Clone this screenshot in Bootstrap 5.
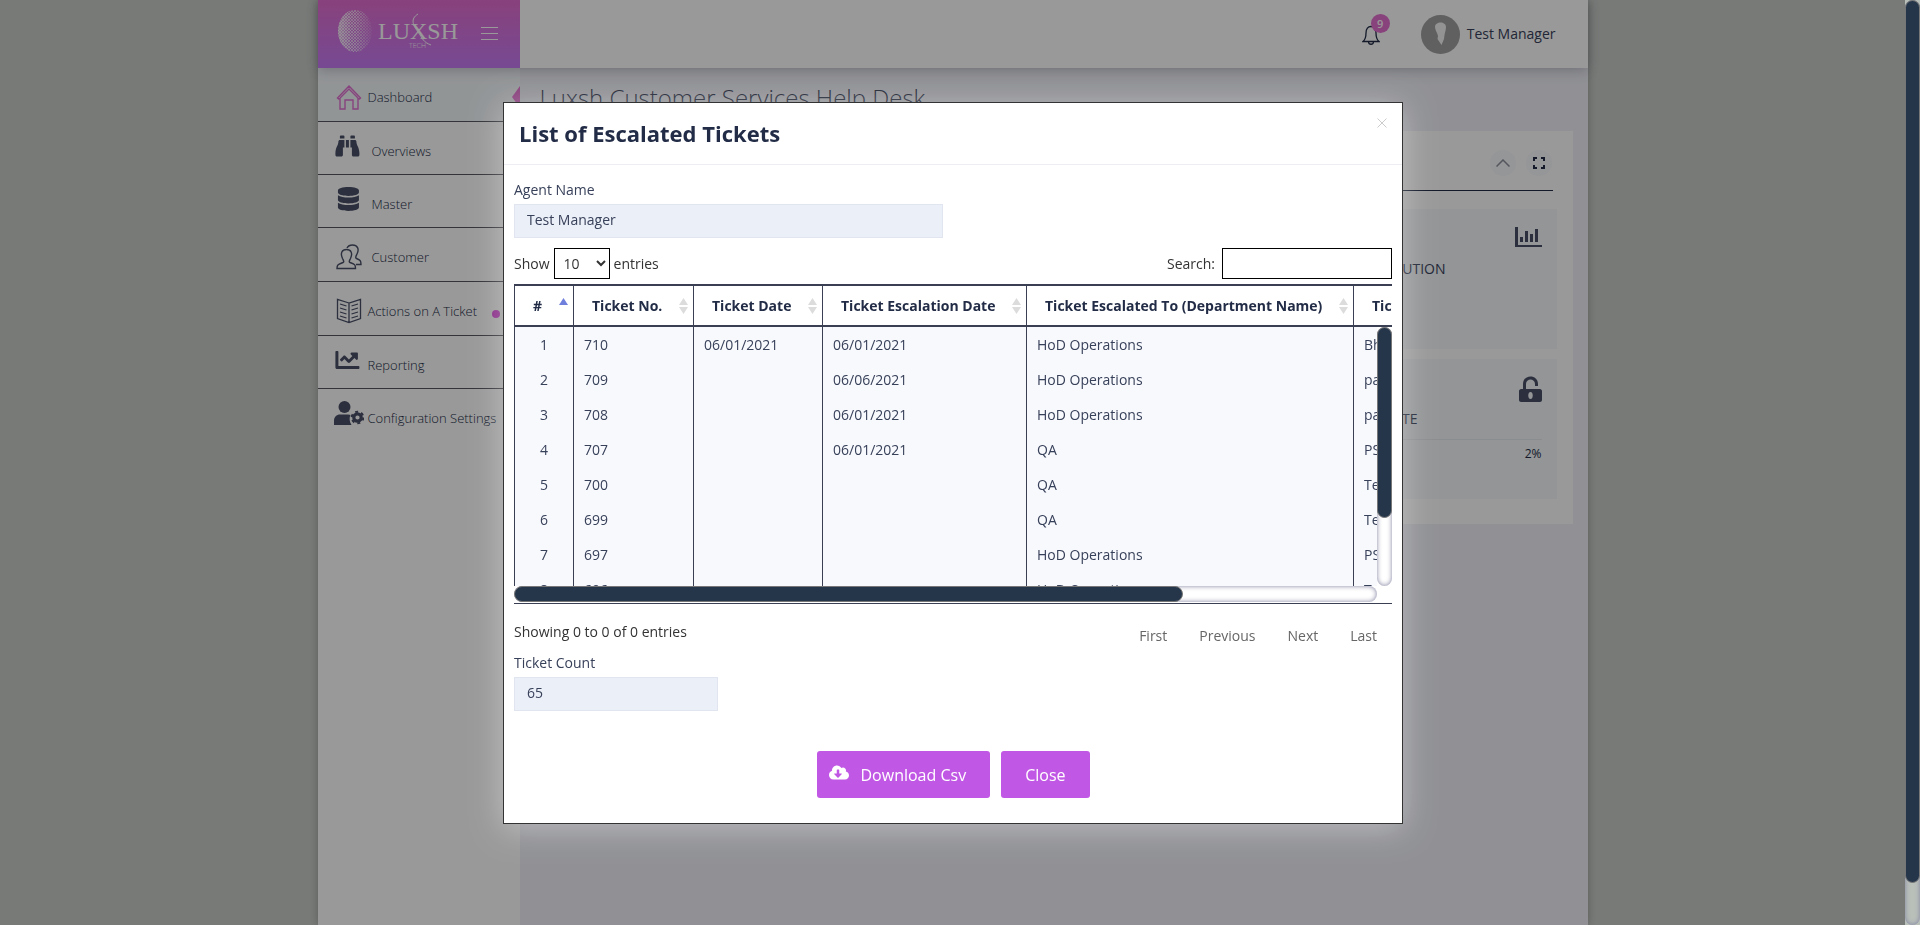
<!DOCTYPE html>
<html lang="en">
<head>
<meta charset="utf-8">
<meta name="viewport" content="width=device-width, initial-scale=1">
<title>Luxsh Customer Services Help Desk</title>
<link href="https://cdn.jsdelivr.net/npm/bootstrap@5.3.0/dist/css/bootstrap.min.css" rel="stylesheet">
<style>
  :root { --ink: #222c46; --soft: #38415a; --line: #3b3f54; --bar: #25364b; --violet: #c158e5; }
  html, body { height: 100%; }
  body { font-family: "Open Sans", sans-serif; font-size: 14px; line-height: 20px; color: var(--soft); background: #c8ccc8; overflow: hidden; }
  a { color: inherit; text-decoration: none; }

  .app-shell { max-width: 1270px; background: #f0f1f8; box-shadow: 0 0 8px rgba(0,0,0,.25); }
  .app-top { height: 68px; background: #fff; box-shadow: 0 2px 12px rgba(60,60,80,.3); z-index: 1; }
  .brand-box { width: 202px; background: linear-gradient(#e36ecf, #c67bf5); padding: 0 22px 0 18px; }
  .side-menu { width: 202px; background: #fff; }
  .side-menu a { height: 54px; padding: 5px 0 0 16px; gap: 4px; border-bottom: 1px solid #55565f; font-size: 13px; font-weight: 300; color: var(--ink); }
  .side-menu li:nth-child(2) a, .side-menu li:nth-child(3) a, .side-menu li:nth-child(6) a { height: 53px; }
  .side-menu li:last-child a { height: 52px; border-bottom: 0; }
  .side-menu a.current { background: #f4f8fb; }
  .side-menu .raised { margin-bottom: 9px; }
  .pointer-mark { right: 0; top: 18px; border: 11px solid transparent; border-right: 8px solid #e36ecf; border-left: 0; }
  .dot-mark { right: 20px; top: 28px; width: 8px; height: 8px; background: #e04ade; }
  .count-pill { left: 9px; top: -9px; width: 19px; height: 19px; background: #e36ecf; color: #fff; font-size: 11px; line-height: 19px; }
  .user-zone { gap: 41px; padding-right: 32px; }
  .user-link { gap: 7px; }
  .page-body { padding: 12px 15px 0 20px; }
  .page-body h1 { font-size: 24px; line-height: 36px; font-weight: 300; margin-bottom: 15px; }
  .panel-box { background: #fff; padding: 19px 16px 25px; }
  .panel-tools { gap: 10px; padding: 0 1px 14px; margin: 0 4px 18px; border-bottom: 1px solid var(--ink); }
  .round-tool { width: 26px; height: 26px; border: 0; background: #f9fafd; padding: 0; }
  .tile-stack { gap: 10px; }
  .stat-tile { height: 140px; background: #f5f8fb; padding: 17px 15px; }
  .stat-icon { height: 33px; line-height: 0; }
  .stat-tile h2 { font-size: 14px; line-height: 20px; font-weight: 500; margin: 0; }
  .stat-tile hr { margin: 10px 0 4px; color: #c0c4cc; }
  .stat-tile p { font-size: 12px; color: var(--ink); }

  .page-scroll { width: 15px; background: #b9c0ba; }
  .thumb { background: var(--bar); border-radius: 8px; border: 1px solid #777; }
  .page-scroll .thumb { height: 95.5%; }
  .track { background: #fff; border-radius: 8px; box-shadow: inset 0 0 5px #8080a0; }

  .modal-veil { background: rgba(0,0,0,.4); right: 15px; width: auto; padding-left: 1px; }
  .modal-dialog.wide { max-width: 900px; margin: 102px auto 0; }
  .modal-content { border: 1px solid #333; border-radius: 0; color: var(--soft); box-shadow: 0 4px 30px rgba(255,255,255,.4); }
  .modal-header { padding: 15px; border-color: #eceef3; align-items: flex-start; }
  .modal-title { font-size: 22px; line-height: 31px; font-weight: 700; color: var(--ink); }
  .x-btn { border: 0; background: none; padding: 0; line-height: 0; }
  .modal-body { padding: 15px 10px 25px; }
  .soft-input { height: 34px; border: 1px solid #e1e5f0; border-radius: 0; background: #ebeff8; color: var(--soft); font-size: 14px; padding: 0 12px 4px; }
  .half { width: 429px; max-width: 100%; }
  .quarter { width: 204px; }
  .table-tools { margin: 10px 0 5px; color: #333; }
  .search-gap { gap: 7px; }
  .dark-field { height: 31px; border: 1px solid #000; border-radius: 0; background: #fff; color: #333; font-size: 14px; padding: 0 5px; }
  .length-select { width: 56px; }
  .search-field { width: 170px; }

  .grid-head { border-top: 2px solid var(--line); border-bottom: 2px solid var(--line); }
  .grid-view { max-height: 259px; }
  .ticket-grid { width: 1113px; table-layout: fixed; border-collapse: separate; border-spacing: 0; }
  .ticket-grid th, .ticket-grid td { border: 0 solid var(--line); border-right-width: 1px; white-space: nowrap; }
  .ticket-grid tr > :first-child { border-left-width: 1px; }
  .ticket-grid th { height: 39px; padding: 0 5px 0 18px; font-weight: 700; color: var(--ink); }
  .ticket-grid td { height: 35px; padding: 0 10px; background: #f8f9fd; }
  .ticket-grid td:first-child { text-align: center; }
  .col-num { width: 60px; } .col-no { width: 120px; } .col-date { width: 129px; } .col-esc { width: 204px; } .col-dept { width: 327px; }
  .side-bar { width: 15px; }
  .side-bar .thumb { height: 191px; }
  .foot-bar { height: 16px; margin-right: 15px; }
  .foot-bar .thumb { width: 669px; height: 16px; }
  .grid-end { border-bottom: 1px solid var(--line); padding-bottom: 1px; }
  .info-text { color: #333; padding-top: 18px; }
  .pager { padding: 22px 15px 0 0; gap: 32px; }
  .pager a { color: #666; }
  .total-label { margin: 7px 0 4px; }
  .act-row { gap: 11px; margin-top: 40px; }
  .act-btn { height: 47px; border-radius: 3px; background: var(--violet); border: 0; color: #fff; font-size: 16px; font-weight: 500; }
  .act-btn:hover { background: #ad45d2; color: #fff; }
</style>
</head>
<body class="d-flex">

<div class="flex-grow-1 overflow-hidden">
  <div class="app-shell mx-auto h-100 d-flex flex-column">
    <header class="app-top d-flex position-relative">
      <div class="brand-box d-flex align-items-center justify-content-between">
        <a href="#" aria-label="Luxsh Tech">
          <svg width="124" height="48" viewBox="0 0 124 48">
            <defs>
              <pattern id="dots" width="3" height="3" patternUnits="userSpaceOnUse"><circle cx="1" cy="1" r=".9" fill="#fff"/><circle cx="2.500" cy="2.500" r=".7" fill="#fff"/></pattern>
              <linearGradient id="fade"><stop offset="0" stop-color="#fff"/><stop offset=".5" stop-color="#fff" stop-opacity=".85"/><stop offset="1" stop-color="#fff" stop-opacity=".15"/></linearGradient>
              <linearGradient id="core"><stop offset="0" stop-color="#fff" stop-opacity=".6"/><stop offset=".4" stop-color="#fff" stop-opacity="0"/></linearGradient>
              <mask id="ball"><ellipse cx="19" cy="21" rx="17" ry="21" fill="url(#fade)"/></mask>
            </defs>
            <ellipse cx="19" cy="21" rx="17" ry="21" fill="url(#core)"/>
            <rect width="40" height="48" fill="url(#dots)" mask="url(#ball)"/>
            <text x="42" y="29" font-family="Liberation Serif, serif" font-size="24" fill="#fff">LUXSH</text>
            <path d="M82 4c-8 5-5 11 0 18s5 10 13 13" fill="none" stroke="#fff" stroke-width="1"/>
            <text x="73" y="38" font-size="7" font-weight="300" fill="#fff">TECH</text>
          </svg>
        </a>
        <button class="x-btn" type="button" aria-label="Toggle menu"><svg width="17" height="14" stroke="#fff" stroke-width="1"><path d="M0 .5h17M0 6.500h17M0 12.500h17"/></svg></button>
      </div>
      <div class="user-zone ms-auto d-flex align-items-center">
        <a href="#" class="position-relative" aria-label="Notifications">
          <svg width="18" height="21" viewBox="0 0 18 21" fill="none" stroke="#222c46" stroke-width="1.300"><path d="M1 17.500c2.500-2 3-4 3-8.500 0-4 2-6.500 5-6.500s5 2.500 5 6.500c0 4.500.5 6.500 3 8.500zM6.500 18c.3 3 4.700 3 5 0"/></svg>
          <span class="count-pill rounded-circle position-absolute text-center fw-semibold">9</span>
        </a>
        <a href="#" class="user-link d-flex align-items-center">
          <svg width="39" height="39" viewBox="0 0 39 39"><circle cx="19.500" cy="19.500" r="19.500" fill="#a0a0a0"/><path d="M14 12c0-6 11-6 11 0 0 3-1 5-1.500 8l-.5 4-2.500 6-4-6 .5-3c-1-4-3-6-3-9z" fill="#f5f5f5"/></svg>
          <span>Test Manager</span>
        </a>
      </div>
    </header>

    <div class="d-flex flex-grow-1">
      <nav class="side-menu" aria-label="Main">
        <ul class="list-unstyled m-0">
          <li class="position-relative"><a href="#" class="current d-flex align-items-center">
            <svg width="30" height="26" viewBox="0 0 30 26" fill="none" stroke="#e070d0" stroke-width="1.400"><path d="M6 14.500 4.500 15 3.500 14 15 2l11.500 12-1 1-1.500-.5V25h-5v-9h-8v9H6zM6 14l9-9 9 9"/></svg>
            <span>Dashboard</span></a><span class="pointer-mark position-absolute"></span></li>
          <li><a href="#" class="d-flex align-items-center">
            <svg class="raised" width="30" height="24" viewBox="-10 0 600 512" fill="#4a5068"><path d="M416 48c0-8.840-7.160-16-16-16h-64c-8.840 0-16 7.160-16 16v48h96V48zM63.910 159.990C61.400 253.840 3.460 274.220 0 404v44c0 17.670 14.330 32 32 32h96c17.670 0 32-14.330 32-32V288h32V128H95.840c-17.630 0-31.450 14.370-31.930 31.990zm384.180 0c-.48-17.620-14.300-31.990-31.930-31.990H320v160h32v160c0 17.670 14.330 32 32 32h96c17.670 0 32-14.330 32-32v-44c-3.460-129.780-61.400-150.160-63.910-244.010zM176 32h-64c-8.840 0-16 7.160-16 16v48h96V48c0-8.840-7.160-16-16-16zm48 256h64V128h-64v160z"/></svg>
            <span class="ps-1">Overviews</span></a></li>
          <li><a href="#" class="d-flex align-items-center">
            <svg class="raised" width="30" height="24" viewBox="-64 0 600 512" fill="#4a5068"><path d="M448 73.143v45.714C448 159.143 347.667 192 224 192S0 159.143 0 118.857V73.143C0 32.857 100.333 0 224 0s224 32.857 224 73.143zM448 176v102.857C448 319.143 347.667 352 224 352S0 319.143 0 278.857V176c48.125 33.143 136.208 48.572 224 48.572S399.874 209.143 448 176zm0 160v102.857C448 479.143 347.667 512 224 512S0 479.143 0 438.857V336c48.125 33.143 136.208 48.572 224 48.572S399.874 369.143 448 336z"/></svg>
            <span class="ps-1">Master</span></a></li>
          <li><a href="#" class="d-flex align-items-center">
            <svg width="30" height="26" viewBox="0 0 30 26" fill="none" stroke="#4a5068" stroke-width="1.400"><path d="M3 24.500c0-4 1-4 6-6 1.500-.5.500-2-.5-4C6 9 8 5.500 12.500 5.500S19 9 16.500 14.500c-1 2-2 3.500-.5 4 5 2 5.500 2 5.500 6zM13 4c1-2 3-3 5.500-3 5 0 7 4 4.500 9-1 2-2 4-.5 4.500 3.500 1.500 4.500 2 4.500 6h-5"/></svg>
            <span class="ps-1">Customer</span></a></li>
          <li class="position-relative"><a href="#" class="d-flex align-items-center">
            <svg width="30" height="26" viewBox="0 0 30 26" fill="none" stroke="#4a5068" stroke-width="1.300"><path d="M15 5 3.500 1.500v19L15 24.500l11.500-4v-19zM15 5v19M6 6l6.500 2M6 10l6.500 2M6 14l6.500 2M6 18l6.500 2M24 6l-6.500 2M24 10l-6.500 2M24 14l-6.500 2M24 18l-6.500 2"/></svg>
            <span>Actions on A Ticket</span></a><span class="dot-mark rounded-circle position-absolute"></span></li>
          <li><a href="#" class="d-flex align-items-center">
            <svg class="raised" width="30" height="24" viewBox="-10 0 600 512" fill="#4a5068"><path d="M496 384H64V80c0-8.840-7.160-16-16-16H16C7.160 64 0 71.160 0 80v336c0 17.670 14.330 32 32 32h464c8.840 0 16-7.160 16-16v-32c0-8.840-7.160-16-16-16zM464 96H345.940c-21.380 0-32.090 25.850-16.970 40.970l32.400 32.400L288 242.750l-73.370-73.370c-12.500-12.500-32.760-12.500-45.250 0l-68.690 68.690c-6.250 6.250-6.250 16.380 0 22.630l22.620 22.620c6.250 6.250 16.380 6.250 22.630 0L192 237.250l73.370 73.370c12.500 12.500 32.760 12.500 45.250 0l96-96 32.400 32.400c15.120 15.120 40.970 4.410 40.970-16.970V112c.01-8.840-7.150-16-15.990-16z"/></svg>
            <span>Reporting</span></a></li>
          <li><a href="#" class="d-flex align-items-center">
            <svg class="raised" width="30" height="24" viewBox="0 0 30 24" fill="#4a5068"><circle cx="10.500" cy="6" r="6"/><path d="M0 24v-4c0-4 2.500-6.500 6-6.500h8c1 0 2 .2 2.500.6C15 17 15.500 21 17.500 24z"/><circle cx="23.500" cy="16.500" r="3.700" fill="none" stroke="#4a5068" stroke-width="3.200"/><circle cx="23.500" cy="16.500" r="5.800" fill="none" stroke="#4a5068" stroke-width="2" stroke-dasharray="3 3.070"/></svg>
            <span class="text-nowrap">Configuration Settings</span></a></li>
        </ul>
      </nav>

      <main class="page-body flex-grow-1">
        <h1>Luxsh Customer Services Help Desk</h1>
        <section class="panel-box">
          <div class="panel-tools d-flex justify-content-end">
            <button type="button" class="round-tool rounded-circle d-flex align-items-center justify-content-center" aria-label="Collapse"><svg width="14" height="8" fill="none" stroke="#8c909c" stroke-width="1.500"><path d="M.5 7.500 7 1l6.500 6.500"/></svg></button>
            <button type="button" class="round-tool rounded-circle d-flex align-items-center justify-content-center" aria-label="Full screen"><svg width="12" height="12" fill="none" stroke="#222c46" stroke-width="2"><path d="M1 4V1h3M8 1h3v3M11 8v3H8M4 11H1V8"/></svg></button>
          </div>
          <div class="tile-stack d-flex flex-column">
            <div class="stat-tile">
              <div class="stat-icon text-end"><svg width="27" height="22" viewBox="0 0 27 22" fill="#4a5068"><path d="M0 1h3v18h24v2H0zM5 11h3v5H5zM10 5h3v11h-3zM15 8h3v8h-3zM20 3h3v13h-3z"/></svg></div>
              <h2 class="text-end pe-5 me-5">RESOLUTION</h2>
            </div>
            <div class="stat-tile">
              <div class="stat-icon text-end"><svg width="23" height="26" viewBox="0 0 23 26" fill="#4a5068"><path fill-rule="evenodd" d="M4 13V8c0-10 15-10 15 0v2h-3V8c0-6-9-6-9 0v5h14c1 0 2 1 2 2v9c0 1-1 2-2 2H2c-1 0-2-1-2-2v-9c0-1 1-2 2-2zM11.500 16c-3 0-3 7 0 7s3-7 0-7"/></svg></div>
              <h2 class="text-end pe-5 me-5"><span class="pe-4 me-1">RATE</span></h2>
              <hr>
              <p class="text-end m-0">2%</p>
            </div>
          </div>
        </section>
      </main>
    </div>
  </div>
</div>

<div class="page-scroll" aria-hidden="true"><div class="track h-100 bg-transparent"><div class="thumb"></div></div></div>

<div class="modal modal-veil d-block" role="dialog" aria-labelledby="dlgTitle">
  <div class="modal-dialog wide">
    <div class="modal-content">
      <div class="modal-header">
        <h2 class="modal-title" id="dlgTitle">List of Escalated Tickets</h2>
        <button type="button" class="x-btn" aria-label="Close"><svg width="10" height="10" stroke="#ccc" stroke-width="1"><path d="M.5.5l9 9M9.500.5l-9 9"/></svg></button>
      </div>
      <div class="modal-body">
        <label for="agent" class="d-block mb-1">Agent Name</label>
        <input id="agent" class="soft-input half d-block" value="Test Manager" readonly>

        <div class="table-tools d-flex justify-content-between">
          <div class="d-flex align-items-center gap-1">
            <label for="len">Show</label>
            <select id="len" class="dark-field length-select"><option>10</option><option>25</option><option>50</option></select>
            <span>entries</span>
          </div>
          <div class="search-gap d-flex align-items-center">
            <label for="find">Search:</label>
            <input id="find" type="search" class="dark-field search-field">
          </div>
        </div>

        <div class="grid-end">
          <div class="grid-head overflow-hidden">
            <table class="ticket-grid">
              <colgroup><col class="col-num"><col class="col-no"><col class="col-date"><col class="col-esc"><col class="col-dept"><col></colgroup>
              <thead><tr id="headRow"></tr></thead>
            </table>
          </div>
          <div class="grid-view d-flex overflow-hidden">
            <div class="flex-grow-1 overflow-hidden">
              <table class="ticket-grid">
                <colgroup><col class="col-num"><col class="col-no"><col class="col-date"><col class="col-esc"><col class="col-dept"><col></colgroup>
                <tbody id="rows"></tbody>
              </table>
            </div>
            <div class="side-bar track flex-shrink-0" aria-hidden="true"><div class="thumb"></div></div>
          </div>
          <div class="foot-bar track" aria-hidden="true"><div class="thumb"></div></div>
        </div>

        <div class="d-flex justify-content-between">
          <div class="info-text">Showing 0 to 0 of 0 entries</div>
          <nav class="pager d-flex" aria-label="Table pages"><a href="#">First</a><a href="#">Previous</a><a href="#">Next</a><a href="#">Last</a></nav>
        </div>

        <label for="total" class="total-label d-block">Ticket Count</label>
        <input id="total" class="soft-input quarter d-block" value="65" readonly>

        <div class="act-row d-flex justify-content-center">
          <button type="button" class="btn act-btn d-flex align-items-center ps-2 pe-4">
            <svg class="ms-1 me-2 mb-1" width="20" height="15" viewBox="0 20 640 472" fill="#fff"><path d="M537.600 226.600c4.100-10.700 6.400-22.400 6.400-34.600 0-53-43-96-96-96-19.700 0-38.100 6-53.300 16.200C367 64.200 315.300 32 256 32c-88.400 0-160 71.600-160 160 0 2.700.1 5.400.2 8.100C40.200 219.800 0 273.200 0 336c0 79.500 64.500 144 144 144h368c70.700 0 128-57.300 128-128 0-61.900-44-113.600-102.400-125.400zm-132.900 88.700L299.300 420.700c-6.200 6.200-16.400 6.200-22.600 0L171.300 315.300c-10.100-10.100-2.900-27.300 11.300-27.300H248V176c0-8.800 7.200-16 16-16h48c8.800 0 16 7.200 16 16v112h65.400c14.200 0 21.400 17.200 11.300 27.300z"/></svg>
            <span class="ms-1">Download Csv</span>
          </button>
          <button type="button" class="btn act-btn px-4">Close</button>
        </div>
      </div>
    </div>
  </div>
</div>

<script src="https://cdn.jsdelivr.net/npm/bootstrap@5.3.0/dist/js/bootstrap.bundle.min.js"></script>
<script>
  const heads = ['#', 'Ticket No.', 'Ticket Date', 'Ticket Escalation Date', 'Ticket Escalated To (Department Name)', 'Ticket Escalated To (Name)'];
  const up = '<svg width="9" height="16"><path d="M0 7 4.500 0 9 7z" fill="#6f7fdc"/></svg>';
  const both = '<svg width="9" height="16" fill="#dcdcdc"><path d="M0 7 4.500 0 9 7zM0 9h9l-4.500 7z"/></svg>';
  document.getElementById('headRow').innerHTML = heads.map((h, i) =>
    `<th scope="col"><div class="d-flex align-items-center justify-content-between"><span>${h}</span>${i ? both : up}</div></th>`).join('');
  const data = [
    ['710', '06/01/2021', '06/01/2021', 'HoD Operations', 'Bhavesh'],
    ['709', '', '06/06/2021', 'HoD Operations', 'pankaj'],
    ['708', '', '06/01/2021', 'HoD Operations', 'pankaj'],
    ['707', '', '06/01/2021', 'QA', 'PS Manager'],
    ['700', '', '', 'QA', 'Test Agent'],
    ['699', '', '', 'QA', 'Test Agent'],
    ['697', '', '', 'HoD Operations', 'PS Manager'],
    ['696', '', '', 'HoD Operations', 'Test Agent']
  ];
  document.getElementById('rows').innerHTML = data.map((r, i) =>
    `<tr><td>${i + 1}</td>${r.map(c => `<td>${c}</td>`).join('')}</tr>`).join('');
</script>
</body>
</html>
